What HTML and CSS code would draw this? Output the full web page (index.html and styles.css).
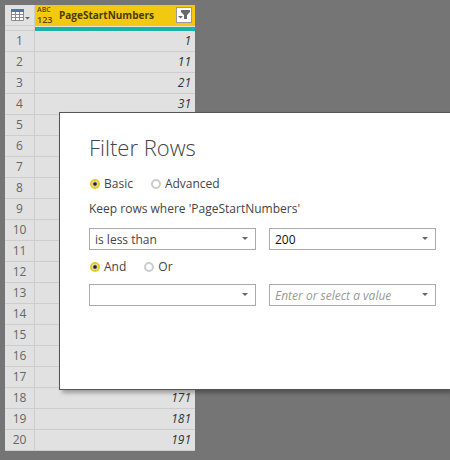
FILE: index.html
```
<!DOCTYPE html>
<html lang="en">
<head>
    <meta charset="UTF-8">
    <meta name="viewport" content="width=device-width, initial-scale=1.0">
    <title>Filter Rows</title>
    <link rel="stylesheet" href="styles.css">
</head>
<body>
    <table class="preview">
        <thead>
            <tr class="head-row">
                <th class="corner">
                    <button class="table-menu" type="button" aria-label="Table menu">
                        <svg width="20" height="12" viewBox="0 0 20 12">
                            <path fill="#fff" d="M0 0h13v12H0z"/>
                            <path fill="none" stroke="#8a8a8a" d="M.5 3v8.500h12V3M.5 5.500h12M.5 8.500h12M4.500 3v8M8.500 3v8"/>
                            <path fill="#4a78ab" d="M0 0h13v3H0z"/>
                            <path fill="#666" d="M14 8h5L16.500 10.500z"/>
                        </svg>
                    </button>
                </th>
                <th class="column-head">
                    <div class="column-bar">
                        <span class="type-icon"><span class="type-abc">ABC</span><span class="type-num">123</span></span>
                        <span class="column-name">PageStartNumbers</span>
                        <button class="filter-btn" type="button" aria-label="Filter">
                            <svg width="12" height="12" viewBox="0 0 12 12">
                                <path fill="#6a6a6a" d="M3 1h9v2L9 6v4H6V6L3 3z"/>
                                <path fill="#6a6a6a" d="M0 7h5L2.500 9.500z"/>
                            </svg>
                        </button>
                    </div>
                </th>
            </tr>
            <tr class="quality-row">
                <td class="quality-blank"></td>
                <td class="quality"></td>
            </tr>
        </thead>
        <tbody>
            <tr><th>1</th><td>1</td></tr>
            <tr><th>2</th><td>11</td></tr>
            <tr><th>3</th><td>21</td></tr>
            <tr><th>4</th><td>31</td></tr>
            <tr><th>5</th><td></td></tr>
            <tr><th>6</th><td></td></tr>
            <tr><th>7</th><td></td></tr>
            <tr><th>8</th><td></td></tr>
            <tr><th>9</th><td></td></tr>
            <tr><th>10</th><td></td></tr>
            <tr><th>11</th><td></td></tr>
            <tr><th>12</th><td></td></tr>
            <tr><th>13</th><td></td></tr>
            <tr><th>14</th><td></td></tr>
            <tr><th>15</th><td></td></tr>
            <tr><th>16</th><td></td></tr>
            <tr><th>17</th><td></td></tr>
            <tr><th>18</th><td>171</td></tr>
            <tr><th>19</th><td>181</td></tr>
            <tr><th>20</th><td>191</td></tr>
        </tbody>
    </table>

    <form class="dialog" role="dialog" aria-labelledby="dialogTitle">
        <h1 id="dialogTitle">Filter Rows</h1>
        <div class="radios mode">
            <label><input type="radio" name="mode" checked>Basic</label>
            <label><input type="radio" name="mode">Advanced</label>
        </div>
        <p class="hint">Keep rows where 'PageStartNumbers'</p>
        <div class="condition">
            <div class="field">
                <select aria-label="Operator">
                    <option>is less than</option>
                    <option>equals</option>
                </select>
            </div>
            <div class="field">
                <input class="value" type="text" value="200" aria-label="Value">
            </div>
        </div>
        <div class="radios join">
            <label><input type="radio" name="join" checked>And</label>
            <label><input type="radio" name="join">Or</label>
        </div>
        <div class="condition">
            <div class="field">
                <select aria-label="Second operator">
                    <option></option>
                    <option>equals</option>
                </select>
            </div>
            <div class="field">
                <input class="value" type="text" placeholder="Enter or select a value" aria-label="Second value">
            </div>
        </div>
    </form>
</body>
</html>
```

FILE: styles.css
```
* {
    box-sizing: border-box;
}
body {
    margin: 0;
    padding: 5px;
    min-height: 100vh;
    position: relative;
    overflow: hidden;
    background: #757575;
    color: #444;
    font-family: "Open Sans", "Noto Sans", sans-serif;
    font-size: 12px;
}

/* data preview */
.preview {
    width: 190px;
    table-layout: fixed;
    border-collapse: separate;
    border-spacing: 0;
    background: #e1e1e1;
}
.preview th,
.preview td {
    padding: 0;
    height: 21px;
    line-height: 20px;
    border-bottom: 1px solid #cdcdcd;
}
.preview tbody th {
    border-right: 1px solid #cdcdcd;
    font-weight: normal;
    color: #666;
}
.preview tbody td {
    padding-right: 4px;
    text-align: right;
    font-style: italic;
    color: #333;
}
.preview .corner {
    width: 30px;
    border-right: 1px solid #cdcdcd;
}
.preview .column-head {
    background: #f2c811;
    border-bottom-color: #f2c811;
}
.preview .quality-row td {
    height: 5px;
    line-height: 0;
}
.preview .quality-blank {
    border-right: 1px solid #cdcdcd;
}
.preview .quality-row .quality {
    background: #1bb1a5;
    border-top: 1px solid #e1e1e1;
    border-bottom: 0;
}
.table-menu {
    display: flex;
    margin-left: 6px;
    padding: 0;
    border: 0;
    background: none;
}
.column-bar {
    display: flex;
    align-items: center;
    height: 20px;
    padding: 0 3px 0 2px;
}
.type-icon {
    display: flex;
    flex-direction: column;
    width: 22px;
    color: #5a4a08;
    font-weight: 600;
    text-align: left;
}
.type-abc {
    font-size: 7px;
    line-height: 10px;
}
.type-num {
    font-size: 9px;
    line-height: 10px;
}
.column-name {
    flex: 1;
    color: #4a3c05;
    font-size: 10px;
    font-weight: 700;
    text-align: left;
}
.filter-btn {
    display: flex;
    align-items: center;
    justify-content: center;
    width: 16px;
    height: 16px;
    padding: 0;
    border: 1px solid #999;
    background: #fff;
}

/* filter dialog */
.dialog {
    position: absolute;
    top: 112px;
    left: 59px;
    right: 0;
    padding: 18px 14px 83px 29px;
    border: 1px solid #555;
    border-right: 0;
    background: #fff;
    box-shadow: 3px 3px 4px rgba(0, 0, 0, 0.3);
}
.dialog h1 {
    margin: 0;
    font-size: 22px;
    font-weight: 300;
    line-height: 32px;
}
.radios {
    display: flex;
    gap: 17px;
    line-height: 18px;
}
.mode {
    margin-top: 12px;
}
.join {
    margin: 8px 0;
}
.radios label {
    display: flex;
    align-items: center;
    gap: 4px;
}
.radios input {
    appearance: none;
    width: 10px;
    height: 10px;
    margin: 0 0 0 1px;
    border: 2px solid #ccc;
    border-radius: 50%;
    background: #fff;
}
.radios input:checked {
    border-color: #e8c91c;
    background: radial-gradient(circle, #222 1px, #fff 3px);
}
.hint {
    margin: 7px 0 10px;
    line-height: 18px;
}
.condition {
    display: grid;
    grid-template-columns: 1fr 1fr;
    gap: 13px;
}
.field {
    position: relative;
}
.field::after {
    content: "";
    position: absolute;
    top: 9px;
    right: 8px;
    border: 3px solid transparent;
    border-top-color: #666;
    border-bottom: 0;
    pointer-events: none;
}
.field select,
.field input {
    display: block;
    appearance: none;
    width: 100%;
    height: 22px;
    padding: 0 18px 0 5px;
    border: 1px solid #ababab;
    border-radius: 0;
    background: #fff;
    color: #444;
    font: inherit;
}
.field .value {
    color: #111;
}
.value::placeholder {
    color: #999;
    font-style: italic;
}
```
